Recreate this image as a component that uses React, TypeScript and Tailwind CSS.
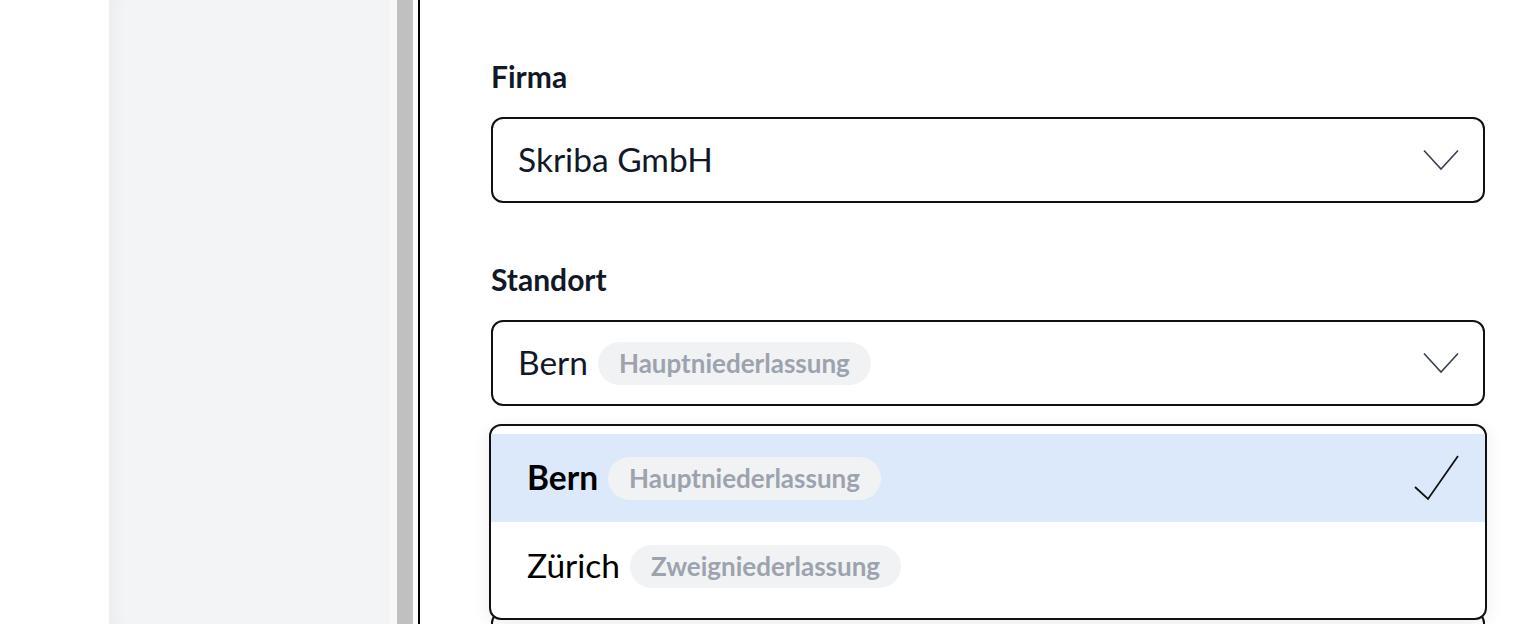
import React from "react";

function Chevron() {
  return (
    <svg width="36" height="22" viewBox="0 0 36 22" fill="none" className="shrink-0">
      <polyline points="1,1.5 18,20 35,1.5" stroke="#374151" strokeWidth="1.6" strokeLinejoin="miter" />
    </svg>
  );
}

function Check() {
  return (
    <svg width="46" height="46" viewBox="0 0 46 46" fill="none" className="shrink-0">
      <polyline points="1,32 14,44 44,1" stroke="#111111" strokeWidth="1.8" />
    </svg>
  );
}

function Badge({ children }: { children: React.ReactNode }) {
  return (
    <span className="inline-flex h-[43px] items-center rounded-full bg-[#f1f2f4] px-[21px] text-[26px] font-bold leading-none text-[#9ca3af]">
      {children}
    </span>
  );
}

function Label({ children }: { children: React.ReactNode }) {
  return <div className="h-[30px] text-[30px] font-bold leading-none text-[#111827]">{children}</div>;
}

function SelectBox({ children }: { children: React.ReactNode }) {
  return (
    <div className="flex h-[86px] items-center rounded-[12px] border-2 border-[#111] bg-white pl-[25px] pr-[24px]">
      <div className="flex flex-1 items-center gap-[10px] text-[33.5px] leading-none text-[#111827]">{children}</div>
      <Chevron />
    </div>
  );
}

export default function App() {
  return (
    <div className="flex h-[624px] w-[1540px] overflow-hidden bg-white font-['Lato','Noto_Sans',sans-serif]">
      <div className="w-[109px] shrink-0 bg-white" />
      <div className="w-[281px] shrink-0 bg-[#f3f4f6] shadow-[inset_16px_0_14px_-10px_rgba(0,0,0,0.035)]" />
      <div className="w-[7px] shrink-0 bg-[#f8f8f8]" />
      <div className="w-[16px] shrink-0 bg-[#c0c0c0]" />
      <div className="w-[5px] shrink-0 bg-white" />
      <div className="w-[2px] shrink-0 bg-black" />
      <main className="relative flex flex-1 flex-col">
        <div className="pl-[71px] pr-[55px] pt-[61px]">
          <Label>Firma</Label>
          <div className="mt-[26px]">
            <SelectBox>
              <span>Skriba GmbH</span>
            </SelectBox>
          </div>
          <div className="mt-[61px]">
            <Label>Standort</Label>
          </div>
          <div className="mt-[26px]">
            <SelectBox>
              <span>Bern</span>
              <Badge>Hauptniederlassung</Badge>
            </SelectBox>
          </div>
        </div>
        <div className="mt-[72px] h-px w-full bg-black" />
        <div className="pl-[71px] pr-[55px] pt-[133px]">
          <div className="h-[86px] rounded-[12px] border-2 border-[#111] bg-white" />
        </div>

        <div className="absolute left-[69px] top-[424px] w-[998px] rounded-[12px] border-2 border-[#111] bg-white py-[8px] shadow-[0_4px_18px_rgba(0,0,0,0.08)]">
          <div className="flex h-[88px] items-center bg-[#dce9fb] pl-[36px] pr-[25px]">
            <div className="flex flex-1 items-center gap-[10px] text-[33.5px] leading-none text-black">
              <span className="font-bold">Bern</span>
              <Badge>Hauptniederlassung</Badge>
            </div>
            <Check />
          </div>
          <div className="flex h-[88px] items-center pl-[36px] pr-[25px]">
            <div className="flex flex-1 items-center gap-[10px] text-[33.5px] leading-none text-black">
              <span>Zürich</span>
              <Badge>Zweigniederlassung</Badge>
            </div>
          </div>
        </div>
      </main>
    </div>
  );
}
